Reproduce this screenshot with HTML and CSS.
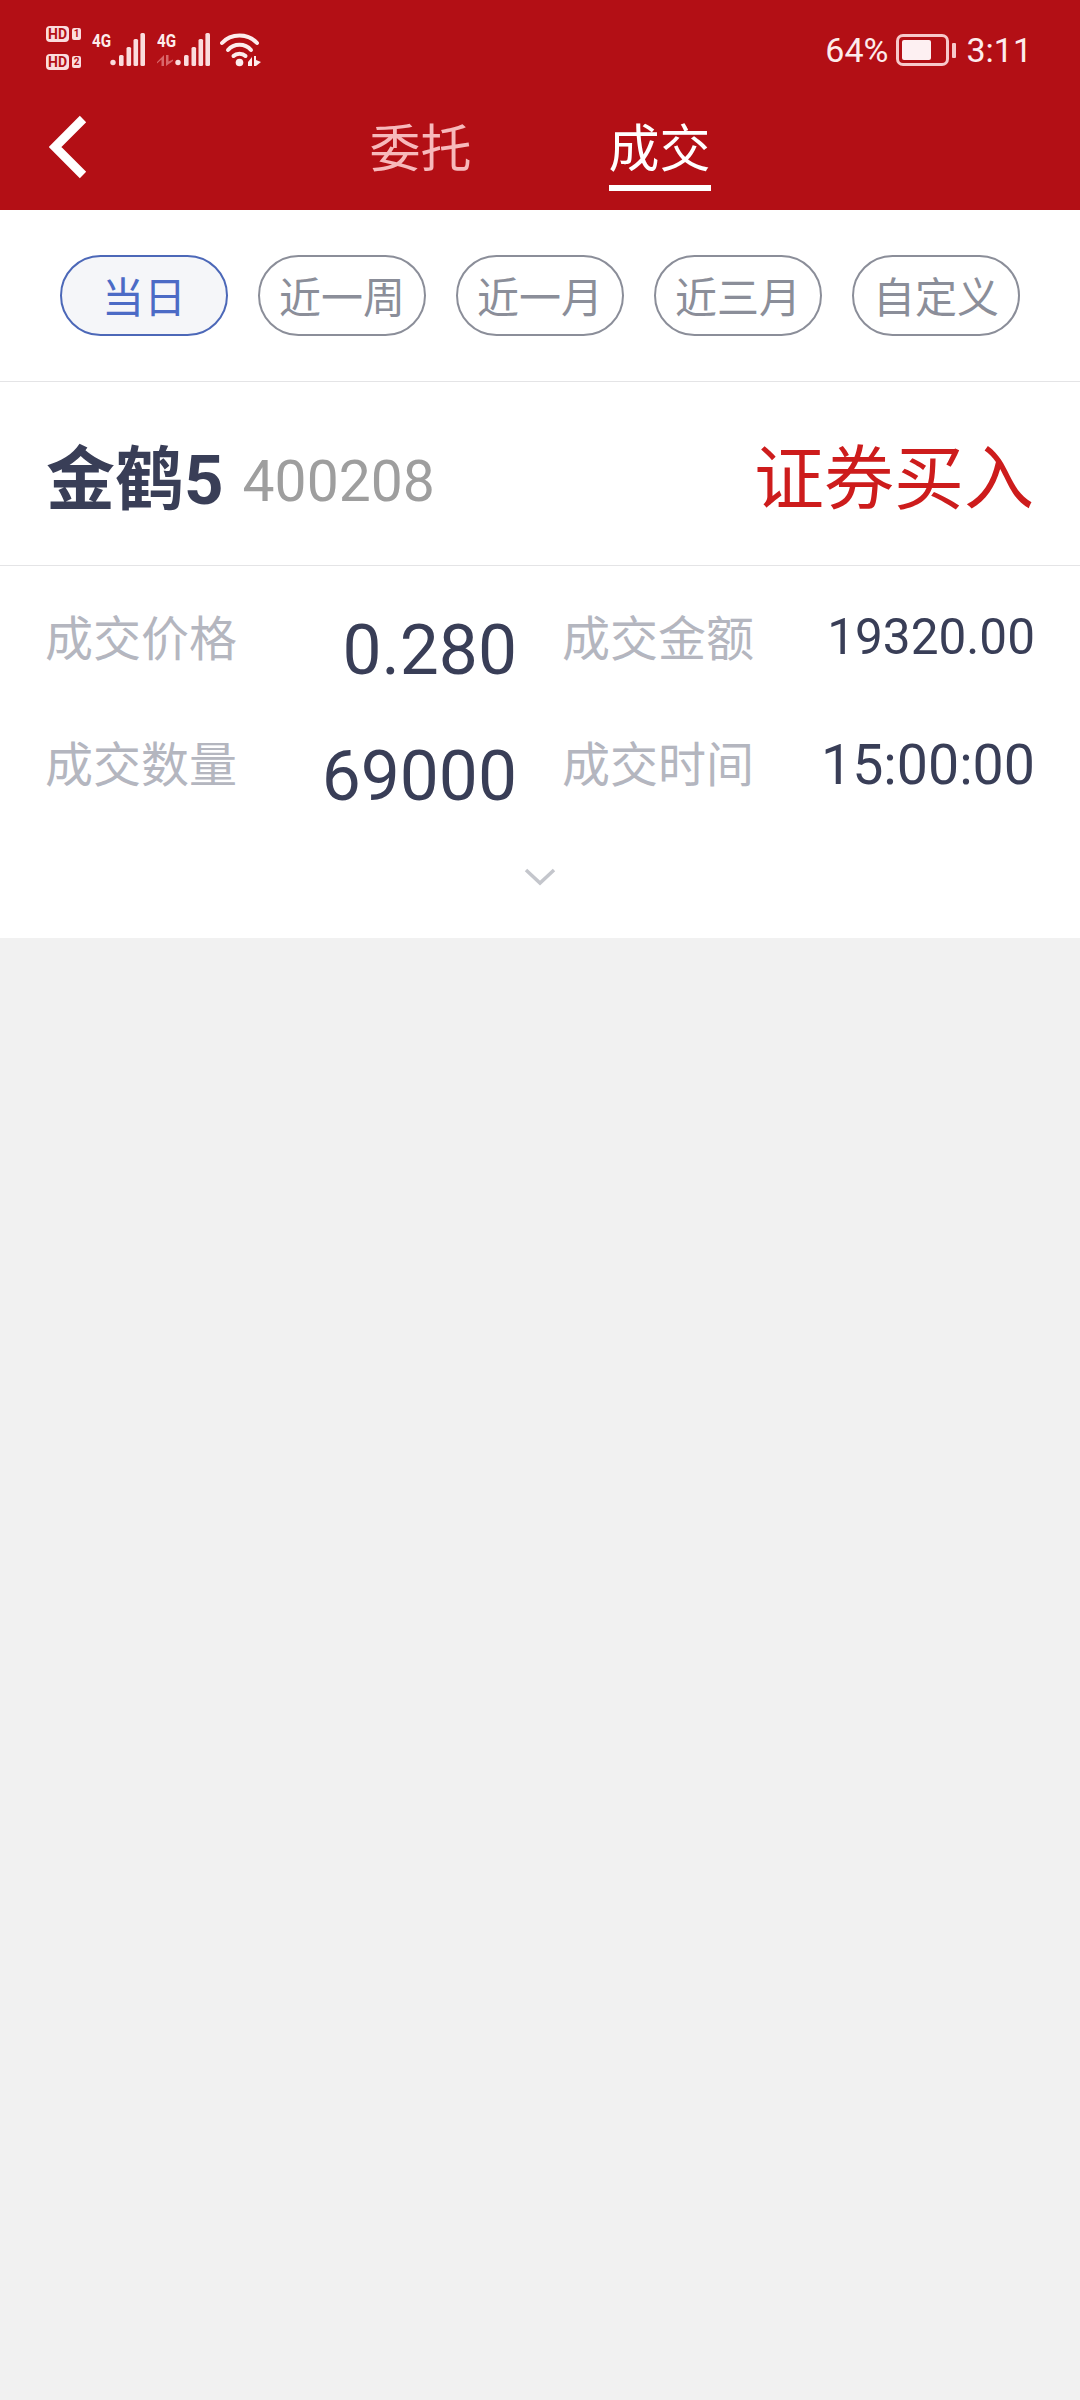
FILE: index.html
```html
<!DOCTYPE html>
<html lang="zh-CN">
<head>
    <meta charset="UTF-8">
    <meta name="viewport" content="width=device-width, initial-scale=1.0">
    <title>成交</title>
    <link rel="stylesheet" href="styles.css">
</head>
<body>
    <header class="top">
        <div class="status-bar">
            <div class="status-left">
                <div class="sims">
                    <div class="sim"><span class="hd">HD</span><span class="sim-no">1</span></div>
                    <div class="sim"><span class="hd">HD</span><span class="sim-no">2</span></div>
                </div>
                <div class="net">
                    <span class="net-label">4G</span>
                    <svg class="bars" viewBox="0 0 35 33">
                        <circle cx="3" cy="29.5" r="2.7"/>
                        <rect x="9" y="22" width="4.6" height="11" rx="1.5"/>
                        <rect x="16.500" y="14" width="4.6" height="19" rx="1.5"/>
                        <rect x="23.500" y="6" width="4.6" height="27" rx="1.5"/>
                        <rect x="30.400" y="0" width="4.6" height="33" rx="1.5"/>
                    </svg>
                </div>
                <div class="net net-second">
                    <span class="net-label">4G</span>
                    <svg class="arrows" viewBox="0 0 16 11">
                        <path d="M7 0V11H4.500V4.500L0 8.500V7Z"/>
                        <path d="M9 11V0H11.500V6.500L16 4.500V6Z"/>
                    </svg>
                    <svg class="bars" viewBox="0 0 35 33">
                        <circle cx="3" cy="29.5" r="2.7"/>
                        <rect x="9" y="22" width="4.6" height="11" rx="1.5"/>
                        <rect x="16.500" y="14" width="4.6" height="19" rx="1.5"/>
                        <rect x="23.500" y="6" width="4.6" height="27" rx="1.5"/>
                        <rect x="30.400" y="0" width="4.6" height="33" rx="1.5"/>
                    </svg>
                </div>
                <svg class="wifi" viewBox="0 0 41 34">
                    <g fill="none" stroke="#fdecec" stroke-width="4" stroke-linecap="round">
                        <path d="M2 10C11 0 28 0 37 10"/>
                        <path d="M8 17C14 10 25 10 31 17"/>
                        <path d="M13.500 23C16.500 20 22.500 20 25.500 23"/>
                    </g>
                    <circle cx="19.500" cy="29.500" r="3.800" fill="#fdecec"/>
                    <path d="M28 29L32 24V33H28Z M34 23H36V27L41 29L36 33H34Z" fill="#fdecec"/>
                </svg>
            </div>
            <div class="status-right">
                <span class="pct">64%</span>
                <div class="battery"><div class="battery-fill"></div></div>
                <div class="battery-nub"></div>
                <span class="clock">3:11</span>
            </div>
        </div>
        <nav class="nav">
            <svg class="back" viewBox="0 0 38 64">
                <path d="M34 4L6 32L34 60" fill="none" stroke="#fff" stroke-width="9"/>
            </svg>
            <div class="tabs">
                <div class="tab">委托</div>
                <div class="tab active">成交</div>
            </div>
        </nav>
    </header>

    <div class="filters">
        <div class="chip selected">当日</div>
        <div class="chip">近一周</div>
        <div class="chip">近一月</div>
        <div class="chip">近三月</div>
        <div class="chip">自定义</div>
    </div>

    <section class="trade">
        <div class="trade-head">
            <div class="stock">
                <span class="stock-name">金鹤5</span>
                <span class="stock-code">400208</span>
            </div>
            <div class="trade-type">证券买入</div>
        </div>
        <div class="trade-grid">
            <div class="cell">
                <span class="label">成交价格</span>
                <span class="value big">0.280</span>
            </div>
            <div class="cell">
                <span class="label">成交金额</span>
                <span class="value small">19320.00</span>
            </div>
            <div class="cell">
                <span class="label">成交数量</span>
                <span class="value big">69000</span>
            </div>
            <div class="cell">
                <span class="label">成交时间</span>
                <span class="value mid">15:00:00</span>
            </div>
        </div>
        <div class="more">
            <svg class="more-icon" viewBox="0 0 32 18">
                <path d="M2 2L16 15L30 2" fill="none" stroke="#c4c6cc" stroke-width="3.500"/>
            </svg>
        </div>
    </section>
</body>
</html>
```

FILE: styles.css
```css
* {
    box-sizing: border-box;
    margin: 0;
    padding: 0;
}

body {
    width: 1080px;
    height: 2400px;
    overflow: hidden;
    font-family: Roboto, "Noto Sans CJK SC", sans-serif;
    background-color: #f1f1f1;
    color: #393e57;
}

.top {
    height: 210px;
    background-color: #b30f15;
}

.status-bar {
    height: 100px;
    padding: 26px 48px 0 46px;
    display: flex;
    justify-content: space-between;
    color: #fdecec;
}

.status-left {
    display: flex;
    align-items: flex-start;
}

.sims {
    width: 35px;
    margin-right: 11px;
    display: flex;
    flex-direction: column;
    gap: 12px;
}

.sim {
    display: flex;
    align-items: center;
    justify-content: space-between;
    height: 16px;
}

.hd {
    width: 23px;
    height: 16px;
    border-radius: 4px;
    background-color: #fbdcdd;
    color: #b30f15;
    font-size: 14px;
    font-weight: 700;
    line-height: 16px;
    text-align: center;
}

.sim-no {
    width: 9px;
    height: 12px;
    border-radius: 2px;
    background-color: #fbdcdd;
    color: #b30f15;
    font-size: 10px;
    font-weight: 700;
    line-height: 12px;
    text-align: center;
}

.net {
    position: relative;
    display: flex;
    padding-left: 18px;
    height: 40px;
}

.net-label {
    position: absolute;
    left: 0;
    top: 6px;
    font-size: 19px;
    line-height: 18px;
    font-weight: 700;
    transform: scaleX(0.8);
    transform-origin: left center;
}

.bars {
    width: 35px;
    height: 33px;
    margin-top: 7px;
    fill: #fbdcdd;
}

.net-second {
    margin-left: 12px;
}

.arrows {
    position: absolute;
    left: 0;
    top: 29px;
    width: 16px;
    height: 11px;
    fill: #d9666a;
}

.wifi {
    width: 41px;
    height: 34px;
    margin-top: 7px;
    margin-left: 10px;
}

.status-right {
    display: flex;
    align-items: center;
    height: 48px;
    font-size: 34px;
}

.battery {
    width: 53px;
    height: 32px;
    margin-left: 8px;
    padding: 3px;
    border: 3px solid #f7c9cb;
    border-radius: 7px;
}

.battery-fill {
    width: 29px;
    height: 100%;
    border-radius: 2px;
    background-color: #fdf0f2;
}

.battery-nub {
    width: 4px;
    height: 15px;
    margin-left: 3px;
    border-radius: 1px;
    background-color: #f7c9cb;
}

.clock {
    margin-left: 10px;
}

.nav {
    position: relative;
    height: 110px;
    display: flex;
    justify-content: center;
}

.back {
    position: absolute;
    left: 49px;
    top: 15px;
    width: 38px;
    height: 64px;
}

.tabs {
    display: flex;
    gap: 137px;
}

.tab {
    height: 91px;
    padding-top: 20px;
    font-size: 51px;
    line-height: 60px;
    color: #f7b9bb;
    border-bottom: 6px solid transparent;
}

.tab.active {
    color: #fff;
    border-bottom-color: #fff;
}

.filters {
    height: 172px;
    padding: 45px 60px 0 60px;
    display: flex;
    justify-content: space-between;
    background-color: #fff;
    border-bottom: 1px solid #e4e4e6;
}

.chip {
    width: 168px;
    height: 81px;
    border: 2px solid #8b8e99;
    border-radius: 41px;
    font-size: 42px;
    line-height: 83px;
    text-align: center;
    color: #8b8e99;
}

.chip.selected {
    border-color: #4c68b8;
    background-color: #f5f6f9;
    color: #4c6bc6;
}

.trade {
    height: 556px;
    background-color: #fff;
}

.trade-head {
    height: 184px;
    padding: 0 46px;
    display: flex;
    align-items: center;
    justify-content: space-between;
    border-bottom: 1px solid #e4e4e6;
}

.stock-name {
    font-size: 69px;
    font-weight: 700;
}

.stock-code {
    margin-left: 15px;
    font-size: 57px;
    color: #9e9e9e;
    vertical-align: 3px;
}

.trade-type {
    font-size: 70px;
    color: #cd1c1c;
}

.trade-grid {
    display: grid;
    grid-template-columns: 472px 473px;
    column-gap: 45px;
    grid-auto-rows: 126px;
    padding: 42px 45px 0 45px;
}

.cell {
    display: flex;
    justify-content: space-between;
    align-items: flex-start;
}

.label {
    font-size: 48px;
    line-height: 64px;
    color: #b4b6bf;
}

.value {
    line-height: 64px;
}

.value.big {
    padding-top: 11px;
    font-size: 69.500px;
}

.value.small {
    font-size: 49.500px;
    margin-top: -3px;
}

.value.mid {
    font-size: 55.500px;
}

.more {
    display: flex;
    justify-content: center;
    padding-top: 8px;
}

.more-icon {
    width: 32px;
    height: 18px;
}
```
